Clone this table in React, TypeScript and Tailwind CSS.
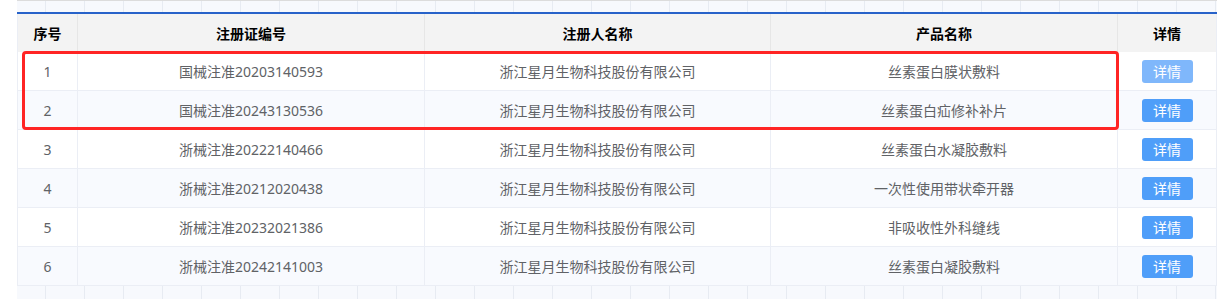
import React from 'react'

type Row = {
  no: number
  certNo: string
  registrant: string
  product: string
}

const rows: Row[] = [
  { no: 1, certNo: '国械注准20203140593', registrant: '浙江星月生物科技股份有限公司', product: '丝素蛋白膜状敷料' },
  { no: 2, certNo: '国械注准20243130536', registrant: '浙江星月生物科技股份有限公司', product: '丝素蛋白疝修补补片' },
  { no: 3, certNo: '浙械注准20222140466', registrant: '浙江星月生物科技股份有限公司', product: '丝素蛋白水凝胶敷料' },
  { no: 4, certNo: '浙械注准20212020438', registrant: '浙江星月生物科技股份有限公司', product: '一次性使用带状牵开器' },
  { no: 5, certNo: '浙械注准20232021386', registrant: '浙江星月生物科技股份有限公司', product: '非吸收性外科缝线' },
  { no: 6, certNo: '浙械注准20242141003', registrant: '浙江星月生物科技股份有限公司', product: '丝素蛋白凝胶敷料' },
]

// faint grid left over from the table above / below
const Strip = ({ top }: { top?: boolean }) => (
  <div
    className={
      top
        ? 'flex h-[12px] border-t border-[#dcdcdc] bg-[#f7f9fd]'
        : 'flex h-[13px] bg-[#f7f9fd]'
    }
  >
    <div className="w-[29px] shrink-0 border-r border-[#e7ebf2]" />
    {Array.from({ length: 30 }).map((_, i) => (
      <div key={i} className="w-[39px] shrink-0 border-r border-[#e7ebf2]" />
    ))}
  </div>
)

const cols = 'grid grid-cols-[60px_347px_346px_347px_1fr]'

export default function App() {
  return (
    <div
      className="relative w-[1227px] h-[299px] overflow-hidden bg-white pl-[17px]"
      style={{ fontFamily: '"Noto Sans", "Noto Sans CJK SC", sans-serif' }}
    >
      <div className="w-[1200px]">
        <Strip top />
        <div className="h-[2px] bg-[#2762c9]" />

        <div className="border-x border-[#ebeef5]">
          <div className={`${cols} h-[38px] bg-[#f3f3f3] text-[14px] font-bold text-black`}>
            <div className="flex items-center justify-center border-r border-[#e6e6e6]">序号</div>
            <div className="flex items-center justify-center border-r border-[#e6e6e6]">注册证编号</div>
            <div className="flex items-center justify-center border-r border-[#e6e6e6]">注册人名称</div>
            <div className="flex items-center justify-center border-r border-[#e6e6e6]">产品名称</div>
            <div className="flex items-center justify-center">详情</div>
          </div>

          {rows.map((row, i) => (
            <div
              key={row.no}
              className={`${cols} h-[39px] border-b border-[#ebeef5] text-[14px] text-[#606266] ${
                i % 2 === 1 ? 'bg-[#f8fafe]' : 'bg-white'
              }`}
            >
              <div className="flex items-center justify-center border-r border-[#ebeef5]">{row.no}</div>
              <div className="flex items-center justify-center border-r border-[#ebeef5]">{row.certNo}</div>
              <div className="flex items-center justify-center border-r border-[#ebeef5]">{row.registrant}</div>
              <div className="flex items-center justify-center border-r border-[#ebeef5]">{row.product}</div>
              <div className="flex items-center justify-center">
                <button
                  className={`w-[51px] h-[23px] rounded-[3px] text-[14px] text-white ${
                    i === 0 ? 'bg-[#7fb7fb]' : 'bg-[#4f9ef9]'
                  }`}
                >
                  详情
                </button>
              </div>
            </div>
          ))}
        </div>

        <Strip />
      </div>

      {/* red highlight annotation over the first two rows */}
      <div className="absolute left-[22px] top-[51px] w-[1097px] h-[79px] rounded-[4px] border-[3px] border-[#ff2424]" />
    </div>
  )
}
